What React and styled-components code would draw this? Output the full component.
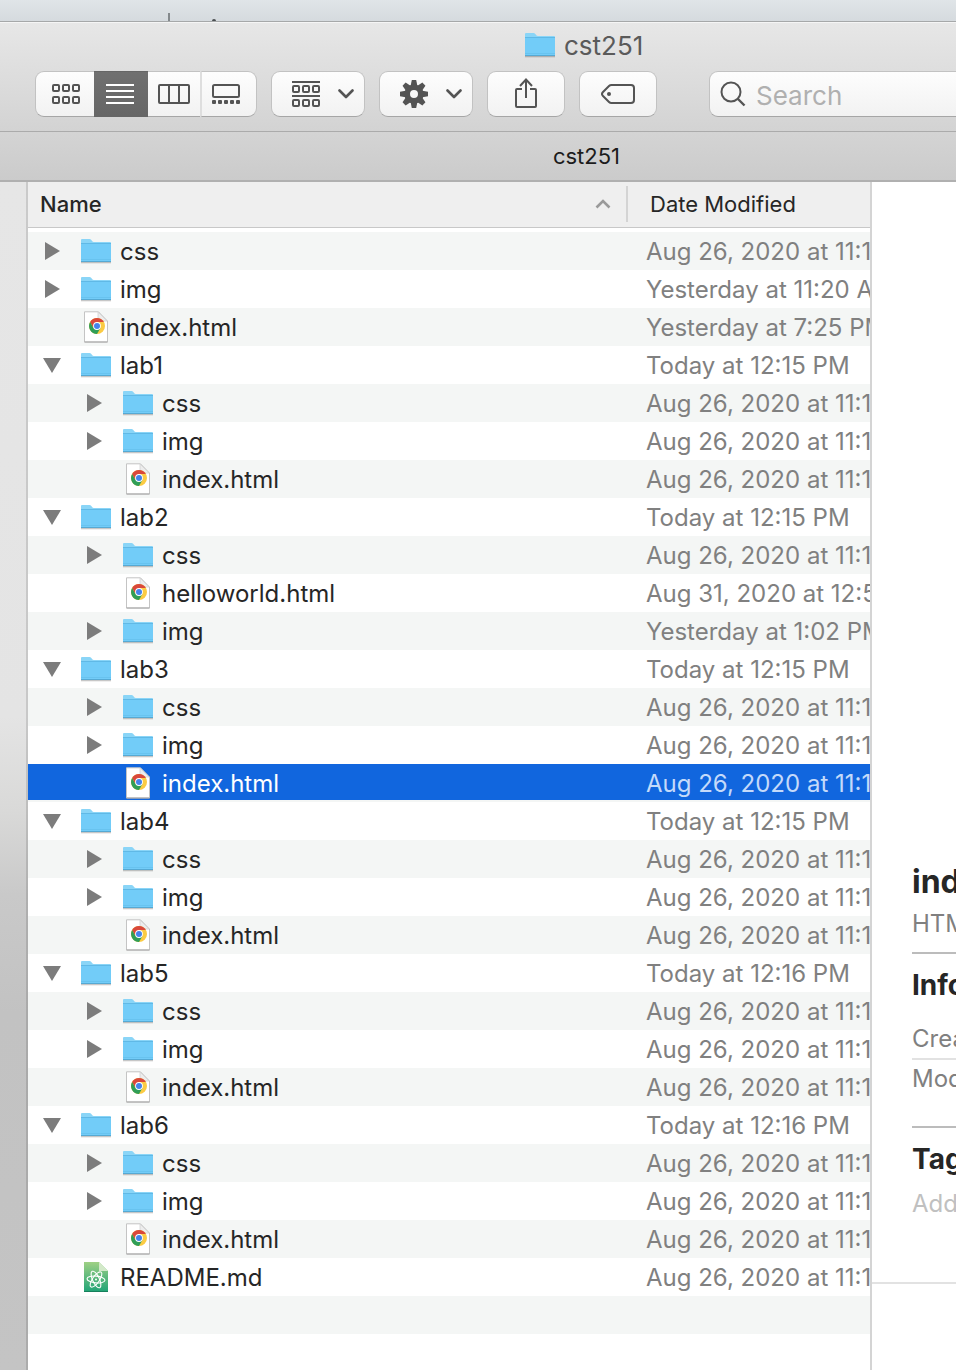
import React from "react";
import styled, { createGlobalStyle } from "styled-components";

const GlobalStyle = createGlobalStyle`
  *, *::before, *::after { box-sizing: border-box; }
  body {
    margin: 0;
    overflow-x: hidden;
    background: #fff;
    color: #262626;
    font-family: Inter, "Liberation Sans", sans-serif;
  }
  button, input {
    margin: 0;
    padding: 0;
    border: 0;
    background: none;
    color: inherit;
    font: inherit;
  }
  svg { display: block; }
`;

const Page = styled.div`
  display: flex;
  flex-direction: column;
  min-height: 100vh;
`;

const Desktop = styled.div`
  display: flex;
  align-items: flex-end;
  height: 21px;
  padding-left: 168px;
  background: linear-gradient(#e0e5e8, #d5dade);
`;

const TitleBar = styled.header`
  border-top: 1px solid #a6a8a9;
  border-bottom: 1px solid #ababab;
  background: linear-gradient(#e7e7e7, #d3d3d3);
  box-shadow: inset 0 1px 0 #f5f5f5;
  padding-bottom: 14px;
`;

const WindowTitle = styled.h1`
  display: flex;
  align-items: center;
  gap: 8px;
  height: 46px;
  margin: 0 0 3px;
  padding-left: 524px;
  font-size: 26px;
  font-weight: 400;
  color: #5a5a5a;
`;

const Toolbar = styled.div`
  display: flex;
  gap: 14px;
  height: 46px;
  padding-left: 35px;
`;

const ToolButton = styled.button`
  display: flex;
  align-items: center;
  justify-content: center;
  gap: 18px;
  flex: none;
  width: ${(p) => p.$width}px;
  border: 1px solid #c2c2c2;
  border-bottom-color: #a6a6a6;
  border-radius: 9px;
  background: linear-gradient(#fdfdfd, #f2f2f2);
  color: #545454;
`;

const MenuButton = styled(ToolButton)`
  padding-left: 10px;
`;

const ViewSwitcher = styled.div`
  display: flex;
  flex: none;
`;

const ViewButton = styled(ToolButton)`
  border-radius: 0;
  border-left-width: 0;
  border-right-width: 0;
  &:first-child {
    padding-left: 2px;
    border-left-width: 1px;
    border-radius: 9px 0 0 9px;
  }
  &:last-child {
    padding-right: 6px;
    border-left: 2px solid #dedede;
    border-right-width: 1px;
    border-radius: 0 9px 9px 0;
  }
  &[aria-pressed="true"] {
    padding-right: 2px;
    border-color: #666;
    background: linear-gradient(#707070, #666);
    color: #fff;
  }
`;

const SearchField = styled.label`
  display: flex;
  align-items: center;
  gap: 10px;
  flex: 1;
  min-width: 0;
  margin-left: 38px;
  padding-left: 10px;
  border: 1px solid #c2c2c2;
  border-right: 0;
  border-bottom-color: #a6a6a6;
  border-radius: 9px 0 0 9px;
  background: linear-gradient(#fdfdfd, #f2f2f2);
  color: #545454;
`;

const SearchInput = styled.input`
  flex: 1;
  min-width: 0;
  padding-top: 2px;
  font-size: 26px;
  outline: none;
  &::placeholder { color: #b0b0b0; opacity: 1; }
`;

const TabBar = styled.div`
  display: flex;
  align-items: center;
  justify-content: center;
  height: 50px;
  padding-left: 217px;
  border-bottom: 2px solid #b0b0b0;
  background: linear-gradient(#d4d4d4, #cbcbcb);
  font-size: 22px;
  color: #1c1c1c;
`;

const Content = styled.div`
  display: flex;
  flex: 1;
`;

const Sidebar = styled.aside`
  flex: none;
  width: 28px;
  border-right: 2px solid rgba(0, 0, 0, 0.12);
  background: linear-gradient(#e6e6e6, #e4e4e4 45%, #d9d9d8 53%, #c9c9c9 60%, #c2c2c2 70%, #c4c4c4);
  background-clip: border-box;
`;

const FileList = styled.main`
  flex: 1;
  min-width: 0;
  overflow: hidden;
`;

const Table = styled.table`
  width: 100%;
  table-layout: fixed;
  border-collapse: separate;
  border-spacing: 0;
  tbody::before {
    content: "";
    display: table-row;
    height: 4px;
  }
`;

const HeaderCell = styled.th`
  width: ${(p) => p.$width};
  height: 46px;
  padding: 0 0 2px ${(p) => p.$indent}px;
  border-bottom: 1px solid #c8c8c8;
  background: #efefef;
  font-size: 22px;
  font-weight: ${(p) => (p.$sorted ? 500 : 400)};
  text-align: left;
`;

const HeaderContent = styled.div`
  display: flex;
  align-items: center;
  gap: 15px;
  svg { margin-left: auto; }
`;

const Divider = styled.span`
  width: 2px;
  height: 36px;
  background: #d4d4d4;
`;

const Row = styled.tr`
  height: 38px;
  &:nth-child(odd) { background: #f4f6f5; }
  &[aria-selected="true"] {
    background: linear-gradient(#1166de 36px, #f4f6f5 36px);
    color: #fff;
  }
`;

const NameCell = styled.td`
  height: 38px;
  padding: 0 0 0 ${(p) => 12 + p.$depth * 42}px;
`;

const DateCell = styled.td`
  padding: 2px 0 0 18px;
  overflow: hidden;
  white-space: nowrap;
  font-size: 24px;
  line-height: 36px;
  color: #808080;
  ${Row}[aria-selected="true"] & { color: #c4dafa; }
`;

const Entry = styled.div`
  display: grid;
  grid-template-columns: 32px 32px auto;
  column-gap: 8px;
  align-items: center;
  font-size: 24px;
  line-height: 36px;
  > svg { justify-self: center; }
`;

const Disclosure = styled.button`
  display: grid;
  place-items: center;
  width: 24px;
  height: 24px;
  color: #7c7c7c;
`;

const FileName = styled.span`
  padding-top: 2px;
`;

const Preview = styled.aside`
  display: flex;
  flex-direction: column;
  justify-content: flex-end;
  flex: none;
  width: 86px;
  overflow: hidden;
  border-left: 2px solid #d4d4d4;
  white-space: nowrap;
`;

const PreviewBody = styled.section`
  padding: 0 0 58px 40px;
  border-bottom: 2px solid #e2e2e2;
`;

const PreviewTitle = styled.h2`
  margin: 0;
  font-size: 32px;
  font-weight: 700;
  line-height: 44px;
`;

const PreviewHeading = styled.h3`
  margin: 0;
  padding: 11px 0 5px;
  border-top: 2px solid #bcbcbc;
  font-size: 28px;
  font-weight: 700;
  line-height: 40px;
`;

const PreviewText = styled.p`
  margin: 0;
  font-size: 24px;
  line-height: 40px;
  color: ${(p) => (p.$muted ? "#c0c0c0" : "#808080")};
`;

const PreviewKind = styled(PreviewText)`
  padding-bottom: 8px;
`;

const Details = styled.dl`
  margin: 10px 0 28px;
`;

const Detail = styled.dt`
  font-size: 24px;
  line-height: 38px;
  color: #808080;
  & + & {
    border-top: 2px solid #e2e2e2;
  }
`;

const PreviewFooter = styled.div`
  height: 86px;
`;

const FolderIcon = () => (
  <svg width="32" height="26" viewBox="0 0 32 26" aria-hidden="true">
    <path d="M1 24.600h30" stroke="#000" strokeOpacity=".22" strokeWidth="1.400" />
    <path d="M1 2q0-1 1-1h7.500q1 0 1.600.8l1.200 1.500q.5.7 1.400.7H30q1 0 1 1v19H1z" fill="#8ad5f7" />
    <path d="M1 6h30v17q0 1-1 1H2q-1 0-1-1z" fill="#72ccf8" />
    <path d="M1 5.500h30" stroke="#60b9e6" />
    <path d="M1 21.500h30" stroke="#62bdea" strokeOpacity=".6" />
    <path d="M1 23.500h30" stroke="#56a9d3" />
  </svg>
);

const ChromeDocIcon = () => (
  <svg width="26" height="32" viewBox="0 0 26 32" aria-hidden="true">
    <path d="M1.500.8h14L24.500 10v21h-23z" fill="#fff" stroke="#c4c4c4" />
    <path d="M1.500 31h23" stroke="#a4a4a4" />
    <path d="M15 1v9h9z" fill="#ededed" stroke="#d0d0d0" strokeWidth=".8" />
    <g transform="translate(14 15)">
      <circle r="8" fill="#fbcb43" />
      <path d="M-6.900-4A8 8 0 0 1 6.900-4H0L-3.500 2z" fill="#d9483b" />
      <path d="M-6.900-4A8 8 0 0 0 0 8L3.500 2 0 0-3.500 2z" fill="#2f9e57" />
      <circle r="3.900" fill="#fff" />
      <circle r="3" fill="#4483ec" />
    </g>
  </svg>
);

const AtomDocIcon = () => (
  <svg width="26" height="32" viewBox="0 0 26 32" aria-hidden="true">
    <defs>
      <linearGradient id="atom-page" x1="0" y1="0" x2="0" y2="1">
        <stop offset="0" stopColor="#9fd085" />
        <stop offset="1" stopColor="#1fa376" />
      </linearGradient>
    </defs>
    <path d="M1 1h15l9 9v21H1z" fill="url(#atom-page)" />
    <path d="M16 1v9h9z" fill="#d3e9c9" />
    <path d="M1 30.500h24" stroke="#17805c" />
    <g transform="translate(13 18.500)" fill="none" stroke="#fff" strokeWidth="1.100">
      <ellipse rx="9" ry="3.400" transform="rotate(5)" />
      <ellipse rx="9" ry="3.400" transform="rotate(65)" />
      <ellipse rx="9" ry="3.400" transform="rotate(125)" />
      <circle r="1" fill="#fff" stroke="none" />
    </g>
  </svg>
);

const Squares = ({ y }) =>
  [1, 11, 21].map((x) => (
    <rect key={x} x={x} y={y} width="6" height="6" rx="1" fill="none" stroke="currentColor" strokeWidth="2" />
  ));

const GridIcon = () => (
  <svg width="28" height="20" aria-hidden="true">
    <Squares y={1} />
    <Squares y={13} />
  </svg>
);

const ListIcon = () => (
  <svg width="28" height="20" aria-hidden="true">
    <path d="M0 1h28M0 7h28M0 13h28M0 19h28" stroke="currentColor" strokeWidth="2" />
  </svg>
);

const ColumnsIcon = () => (
  <svg width="32" height="20" fill="none" stroke="currentColor" strokeWidth="2" aria-hidden="true">
    <rect x="1" y="1" width="30" height="18" rx="1" />
    <path d="M11 1v18M21 1v18" />
  </svg>
);

const GalleryIcon = () => (
  <svg width="28" height="20" aria-hidden="true">
    <rect x="1" y="1" width="26" height="12" rx="1.500" fill="none" stroke="currentColor" strokeWidth="2" />
    {[0, 6, 12, 18, 24].map((x) => (
      <rect key={x} x={x} y="16" width="4" height="4" rx="1" fill="currentColor" />
    ))}
  </svg>
);

const GroupIcon = () => (
  <svg width="28" height="26" aria-hidden="true">
    <path d="M0 1h28M0 15h28" stroke="currentColor" strokeWidth="2" />
    <Squares y={5} />
    <Squares y={19} />
  </svg>
);

const GearIcon = () => (
  <svg width="28" height="28" viewBox="-14 -14 28 28" aria-hidden="true">
    {[0, 45, 90, 135, 180, 225, 270, 315].map((a) => (
      <path key={a} d="M-2.200-14h4.400L3.600-7h-7.200z" transform={`rotate(${a})`} fill="currentColor" />
    ))}
    <circle r="6.800" fill="none" stroke="currentColor" strokeWidth="5.600" />
  </svg>
);

const ChevronDown = () => (
  <svg width="16" height="10" fill="none" aria-hidden="true">
    <path d="M1.500 1.500 8 8l6.500-6.500" stroke="currentColor" strokeWidth="2.600" strokeLinecap="round" strokeLinejoin="round" />
  </svg>
);

const ShareIcon = () => (
  <svg width="24" height="32" fill="none" stroke="currentColor" strokeWidth="2" aria-hidden="true">
    <path d="M8 11H3q-1 0-1 1v16q0 1 1 1h18q1 0 1-1V12q0-1-1-1h-5" />
    <path d="M12 20V2M6 8l6-6.500L18 8" />
  </svg>
);

const TagIcon = () => (
  <svg width="34" height="20" fill="none" stroke="currentColor" strokeWidth="2" aria-hidden="true">
    <path d="M10.500 1H30q3 0 3 3v12q0 3-3 3H10.500Q9 19 8 18L2 12Q0 10 2 8L8 2Q9 1 10.500 1z" />
    <circle cx="8" cy="10" r="2" fill="currentColor" stroke="none" />
  </svg>
);

const SearchIcon = () => (
  <svg width="26" height="26" fill="none" stroke="currentColor" strokeWidth="2" aria-hidden="true">
    <circle cx="11" cy="11" r="9.500" />
    <path d="m17.500 17.500 7 7" strokeWidth="2.400" />
  </svg>
);

const SortIcon = () => (
  <svg width="16" height="10" fill="none" aria-hidden="true">
    <path d="m1.500 8.500 6.500-6.500 6.500 6.500" stroke="#9a9a9a" strokeWidth="2.600" />
  </svg>
);

const Triangle = ({ open }) => (
  <svg width="18" height="18" aria-hidden="true">
    <path d={open ? "M0 2h18L9 17z" : "M2 0v18l15-9z"} fill="currentColor" />
  </svg>
);

const ICONS = { folder: FolderIcon, html: ChromeDocIcon, md: AtomDocIcon };

const AUG = "Aug 26, 2020 at 11:18 AM";
const folder = (name, date, depth = 0, open = false) => ({ name, date, depth, open, kind: "folder" });
const file = (name, date, depth = 0, kind = "html") => ({ name, date, depth, kind });
const lab = (n, date) => [
  folder(`lab${n}`, date, 0, true),
  folder("css", AUG, 1),
  folder("img", AUG, 1),
  { ...file("index.html", AUG, 1), selected: n === 3 },
];

const ENTRIES = [
  folder("css", AUG),
  folder("img", "Yesterday at 11:20 AM"),
  file("index.html", "Yesterday at 7:25 PM"),
  ...lab(1, "Today at 12:15 PM"),
  folder("lab2", "Today at 12:15 PM", 0, true),
  folder("css", AUG, 1),
  file("helloworld.html", "Aug 31, 2020 at 12:50 PM", 1),
  folder("img", "Yesterday at 1:02 PM", 1),
  ...lab(3, "Today at 12:15 PM"),
  ...lab(4, "Today at 12:15 PM"),
  ...lab(5, "Today at 12:16 PM"),
  ...lab(6, "Today at 12:16 PM"),
  file("README.md", AUG, 0, "md"),
];

function FileRow({ entry }) {
  const Icon = ICONS[entry.kind];
  return (
    <Row aria-selected={Boolean(entry.selected)}>
      <NameCell $depth={entry.depth}>
        <Entry>
          {entry.kind === "folder" ? (
            <Disclosure type="button" aria-expanded={entry.open} aria-label={`Toggle ${entry.name}`}>
              <Triangle open={entry.open} />
            </Disclosure>
          ) : (
            <span />
          )}
          <Icon />
          <FileName>{entry.name}</FileName>
        </Entry>
      </NameCell>
      <DateCell>{entry.date}</DateCell>
    </Row>
  );
}

export default function App() {
  return (
    <Page>
      <GlobalStyle />
      <Desktop>
        <svg width="50" height="8" aria-hidden="true">
          <path d="M1 0v8" stroke="#84898c" strokeWidth="2" />
          <path d="M44 8q0-2 2-2t2 2z" fill="#4a4d50" />
        </svg>
      </Desktop>
      <TitleBar>
        <WindowTitle>
          <FolderIcon />
          cst251
        </WindowTitle>
        <Toolbar>
          <ViewSwitcher role="group" aria-label="View">
            <ViewButton $width={59} type="button" aria-label="Icons"><GridIcon /></ViewButton>
            <ViewButton $width={54} type="button" aria-label="List" aria-pressed="true"><ListIcon /></ViewButton>
            <ViewButton $width={52} type="button" aria-label="Columns"><ColumnsIcon /></ViewButton>
            <ViewButton $width={57} type="button" aria-label="Gallery"><GalleryIcon /></ViewButton>
          </ViewSwitcher>
          <MenuButton $width={94} type="button" aria-label="Group"><GroupIcon /><ChevronDown /></MenuButton>
          <MenuButton $width={94} type="button" aria-label="Actions"><GearIcon /><ChevronDown /></MenuButton>
          <ToolButton $width={78} type="button" aria-label="Share"><ShareIcon /></ToolButton>
          <ToolButton $width={78} type="button" aria-label="Edit tags"><TagIcon /></ToolButton>
          <SearchField>
            <SearchIcon />
            <SearchInput type="text" placeholder="Search" aria-label="Search" />
          </SearchField>
        </Toolbar>
      </TitleBar>
      <TabBar>cst251</TabBar>
      <Content>
        <Sidebar />
        <FileList>
          <Table>
            <thead>
              <tr>
                <HeaderCell $width="auto" $indent={12} $sorted aria-sort="ascending">
                  <HeaderContent>
                    Name
                    <SortIcon />
                    <Divider />
                  </HeaderContent>
                </HeaderCell>
                <HeaderCell $width="242px" $indent={22}>Date Modified</HeaderCell>
              </tr>
            </thead>
            <tbody>
              {ENTRIES.map((entry, i) => (
                <FileRow key={i} entry={entry} />
              ))}
              <Row aria-hidden="true">
                <td colSpan={2} />
              </Row>
            </tbody>
          </Table>
        </FileList>
        <Preview>
          <PreviewBody>
            <PreviewTitle>index.html</PreviewTitle>
            <PreviewKind>HTML text</PreviewKind>
            <PreviewHeading>Information</PreviewHeading>
            <Details>
              <Detail>Created</Detail>
              <Detail>Modified</Detail>
            </Details>
            <PreviewHeading>Tags</PreviewHeading>
            <PreviewText $muted>Add Tags…</PreviewText>
          </PreviewBody>
          <PreviewFooter />
        </Preview>
      </Content>
    </Page>
  );
}
